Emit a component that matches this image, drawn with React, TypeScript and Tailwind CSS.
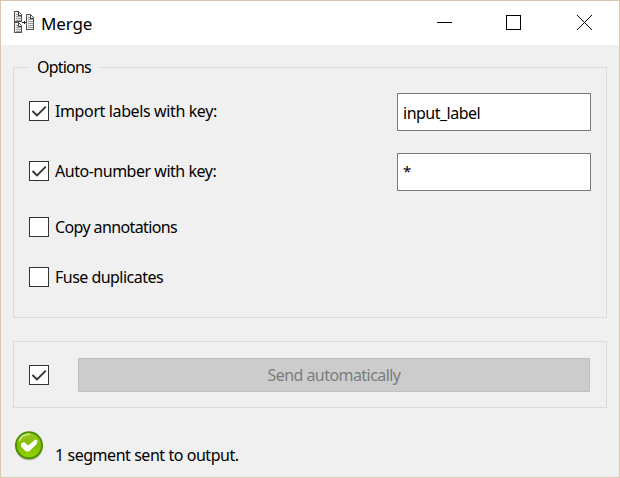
import type { ReactNode } from "react";

function Check({ on }: { on?: boolean }) {
  return (
    <span className="block h-5 w-5 shrink-0 border border-[#333] bg-white">
      {on && (
        <svg viewBox="0 0 18 18" className="block h-[18px] w-[18px]" fill="none" stroke="#333" strokeWidth="1.8">
          <path d="M2.5 9 L7 13.5 L15.8 4.7" />
        </svg>
      )}
    </span>
  );
}

function Option({ on, label, tracking, children }: { on?: boolean; label: string; tracking: string; children?: ReactNode }) {
  return (
    <div className="flex h-[38px] items-center">
      <div className="flex pb-[2px]">
        <Check on={on} />
        <span className={`ml-[6px] whitespace-nowrap leading-5 ${tracking}`}>{label}</span>
      </div>
      {children}
    </div>
  );
}

function Field({ value, small }: { value: string; small?: boolean }) {
  return (
    <div className="ml-auto flex h-[38px] w-[194px] items-center border border-[#7a7a7a] bg-white pl-[5px] pt-px tracking-[-0.5px]">
      <span className={small ? "pb-[3px] text-[15px] leading-4" : ""}>{value}</span>
    </div>
  );
}

function MergeIcon() {
  return (
    <svg viewBox="0 0 22 24" className="h-6 w-[22px]" fill="none" shapeRendering="crispEdges">
      <g fill="#eee" stroke="#555">
        <path d="M1.5 .5h4l3 3v7h-7z" />
        <path d="M1.5 11.5h4l3 3v7h-7z" />
        <path d="M13.5 3.5h4l3 3v12h-7z" />
      </g>
      <path stroke="#444" d="M5.5 1v3h3M5.5 12v3h3M17.5 4v3h3" />
      <path stroke="#999" d="M3 3.5h2M3 5.5h5M3 7.5h5M3 9.5h5M3 14.5h2M3 16.5h5M3 18.5h5M3 20.5h5M15 6.5h2M15 8.5h5M15 10.5h5M15 12.5h5M15 14.5h5M15 16.5h5" />
      <path stroke="#222" d="M9 11.5h4M11.5 10v3" />
    </svg>
  );
}

function StatusIcon() {
  return (
    <svg viewBox="0 0 30 30" className="h-[30px] w-[30px] shrink-0">
      <defs>
        <linearGradient id="g" x1="0" y1="0" x2="0" y2="1">
          <stop offset="0" stopColor="#9fcb28" />
          <stop offset=".5" stopColor="#80bd00" />
          <stop offset="1" stopColor="#99d500" />
        </linearGradient>
      </defs>
      <circle cx="15" cy="15.8" r="13.7" fill="#bbb" />
      <circle cx="15" cy="14.3" r="13" fill="url(#g)" stroke="#4b9200" strokeWidth="2" />
      <path d="M5 10C7 5 11 3 16 3" fill="none" stroke="#d0e696" strokeWidth="1.5" />
      <path d="M7 12.500L10 11L14 14.500L21.500 8.500L23.500 9.500L22.500 13.500L15 20.500L12 20.500L7 15.500Z" fill="#fff" />
    </svg>
  );
}

export default function App() {
  return (
    <div className="flex h-[478px] w-[620px] flex-col border border-[#d9c7ae] bg-[#f0f0f0] font-['Noto_Sans',sans-serif] text-[16px] leading-5 text-black">
      <header className="flex h-11 items-center bg-white pl-3">
        <MergeIcon />
        <span className="ml-[6px] pt-px text-[17px] tracking-[-0.15px]">Merge</span>
        <svg viewBox="0 0 160 20" className="ml-auto mr-[24px] h-5 w-[160px]" fill="none" stroke="#000">
          <path d="M2 9.5h15M71.5 2.5h14v14h-14z" shapeRendering="crispEdges" />
          <path d="M142 2l15 15M157 2l-15 15" />
        </svg>
      </header>
      <main className="flex flex-1 flex-col px-3 pt-3">
        <fieldset className="h-[261px] border border-[#dcdcdc] px-[15px]">
          <legend className="h-5 w-[70px] whitespace-nowrap pl-2 tracking-[-0.8px]">Options</legend>
          <div className="flex flex-col pt-4">
            <Option on label="Import labels with key:" tracking="tracking-[-0.38px]"><Field value="input_label" /></Option>
            <div className="h-[22px]" />
            <Option on label="Auto-number with key:" tracking="tracking-[-0.48px]"><Field value="*" small /></Option>
            <div className="h-[18px]" />
            <Option label="Copy annotations" tracking="tracking-[-0.62px]" />
            <div className="h-3" />
            <Option label="Fuse duplicates" tracking="tracking-[-0.53px]" />
          </div>
        </fieldset>
        <section className="mt-[23px] flex h-[67px] items-center border border-[#dcdcdc] px-[15px]">
          <Check on />
          <div className="ml-[29px] mr-px flex h-[34px] flex-1 items-center justify-center border border-[#bfbfbf] bg-[#ccc] tracking-[-0.56px] text-[#7c7c7c]">Send automatically</div>
        </section>
        <footer className="mt-[23px] flex items-start pl-px">
          <StatusIcon />
          <span className="ml-[11px] mt-[14px] tracking-[-0.45px]">1 segment sent to output.</span>
        </footer>
      </main>
    </div>
  );
}
